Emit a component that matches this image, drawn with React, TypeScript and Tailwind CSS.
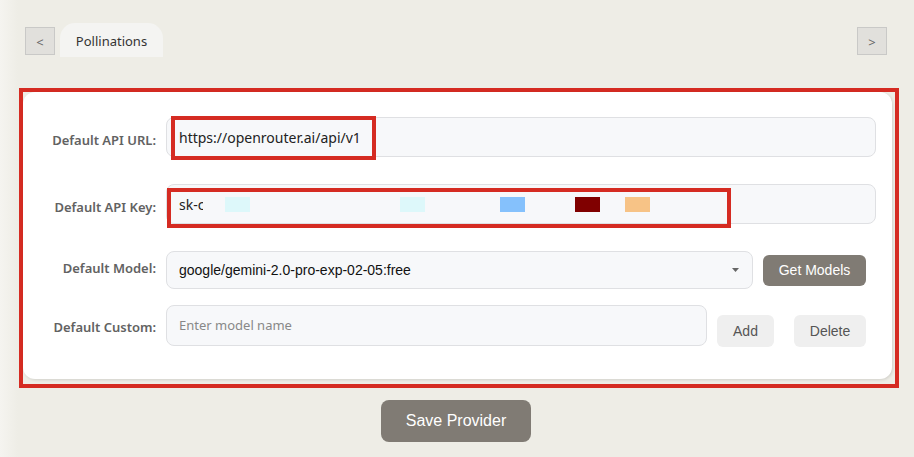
import React from "react";

const sans = { fontFamily: '"Noto Sans", "Open Sans", sans-serif' };
const arial = { fontFamily: '"Liberation Sans", Arial, sans-serif' };

function Label({ children, off }: { children: React.ReactNode; off: string }) {
  return (
    <div
      className={`w-[133px] shrink-0 text-right text-[13px] font-semibold text-[#626262] pr-0 ${off}`}
      style={sans}
    >
      {children}
    </div>
  );
}

export default function App() {
  return (
    <div className="w-[914px] h-[457px] overflow-hidden bg-[linear-gradient(to_right,#f5f4f0_0px,#eeede6_18px)]">
      {/* top bar */}
      <div className="flex items-start pt-[23px] pl-[25px] pr-[27px]">
        <button
          className="mt-[4px] w-[30px] h-[28px] pt-[3px] bg-[#e1e0dc] border border-[#c9c9c7] text-[#666] text-[13px] flex items-center justify-center"
          style={sans}
        >
          &lt;
        </button>
        <div
          className="ml-[5px] w-[103px] h-[34px] pt-[3px] bg-[#f4f4f2] rounded-t-[15px] text-[13px] text-[#333] flex items-center justify-center"
          style={sans}
        >
          Pollinations
        </div>
        <div className="flex-1" />
        <button
          className="mt-[4px] w-[30px] h-[28px] pt-[3px] bg-[#e1e0dc] border border-[#c9c9c7] text-[#666] text-[13px] flex items-center justify-center"
          style={sans}
        >
          &gt;
        </button>
      </div>

      {/* red annotation box */}
      <div className="mt-[31px] ml-[19px] w-[880px] h-[300px] border-4 border-[#d52b22] bg-[#eeede6]">
        <div className="w-[869px] h-[287px] bg-white rounded-[12px] shadow-[1px_1px_3px_rgba(0,0,0,0.12)] pt-[25px] flex flex-col">
          {/* Row 1 */}
          <div className="flex items-center">
            <Label off="mt-[8px]">Default API URL:</Label>
            <div className="relative ml-[10px] w-[710px] h-[40px] bg-[#f7f8fa] border border-[#dfe0e3] rounded-[8px] flex items-center pl-[12px] text-[14px] text-[#222]" style={sans}>
              https://openrouter.ai/api/v1
              <div className="absolute left-[4px] top-[-2px] w-[205px] h-[44px] border-4 border-[#d52b22]" />
            </div>
          </div>
          {/* Row 2 */}
          <div className="flex items-center mt-[27px]">
            <Label off="mt-[7px]">Default API Key:</Label>
            <div className="relative ml-[10px] w-[710px] h-[40px] bg-[#f7f8fa] border border-[#dfe0e3] rounded-[8px] flex items-center pl-[12px] text-[14px] text-[#222]" style={sans}>
              <span className="w-[24px] shrink-0 overflow-hidden whitespace-nowrap">sk-c</span>
              <span className="ml-[22px] w-[25px] h-[15px] bg-[#ddf8fa]" />
              <span className="ml-[150px] w-[25px] h-[15px] bg-[#ddf8fa]" />
              <span className="ml-[75px] w-[25px] h-[15px] bg-[#85c1fc]" />
              <span className="ml-[50px] w-[25px] h-[15px] bg-[#800000]" />
              <span className="ml-[25px] w-[25px] h-[15px] bg-[#f7c386]" />
              <div className="absolute left-[0px] top-[3px] w-[564px] h-[40px] border-4 border-[#d52b22]" />
            </div>
          </div>
          {/* Row 3 */}
          <div className="flex items-center mt-[27px]">
            <Label off="mt-[-2px]">Default Model:</Label>
            <div className="ml-[10px] w-[587px] h-[38px] bg-[#f7f8fa] border border-[#dfe0e3] rounded-[8px] flex items-center pl-[12px] pr-[13px] text-[14px] text-[#111]" style={arial}>
              <span className="flex-1">google/gemini-2.0-pro-exp-02-05:free</span>
              <svg width="7" height="4" viewBox="0 0 7 4">
                <path d="M0 0 L7 0 L3.5 4 Z" fill="#666" />
              </svg>
            </div>
            <button className="ml-[10px] w-[103px] h-[31px] bg-[#807b74] rounded-[6px] text-white text-[14px] flex items-center justify-center" style={arial}>
              Get Models
            </button>
          </div>
          {/* Row 4 */}
          <div className="flex items-start mt-[16px]">
            <div className="w-[133px] shrink-0 text-right text-[13px] font-semibold text-[#626262] mt-[13px]" style={sans}>
              Default Custom:
            </div>
            <div className="ml-[10px] w-[541px] h-[41px] bg-[#f7f8fa] border border-[#dfe0e3] rounded-[8px] flex items-center pl-[12px] text-[13px] text-[#888]" style={sans}>
              Enter model name
            </div>
            <button className="ml-[10px] mt-[10px] w-[57px] h-[32px] bg-[#efefef] rounded-[6px] text-[#555] text-[14px] flex items-center justify-center" style={arial}>
              Add
            </button>
            <button className="ml-[20px] mt-[10px] w-[72px] h-[32px] bg-[#efefef] rounded-[6px] text-[#555] text-[14px] flex items-center justify-center" style={arial}>
              Delete
            </button>
          </div>
        </div>
      </div>

      {/* save */}
      <div className="flex mt-[12px] pl-[381px]">
        <button className="w-[150px] h-[42px] bg-[#807b74] rounded-[8px] text-white text-[16px] flex items-center justify-center" style={arial}>
          Save Provider
        </button>
      </div>
    </div>
  );
}
